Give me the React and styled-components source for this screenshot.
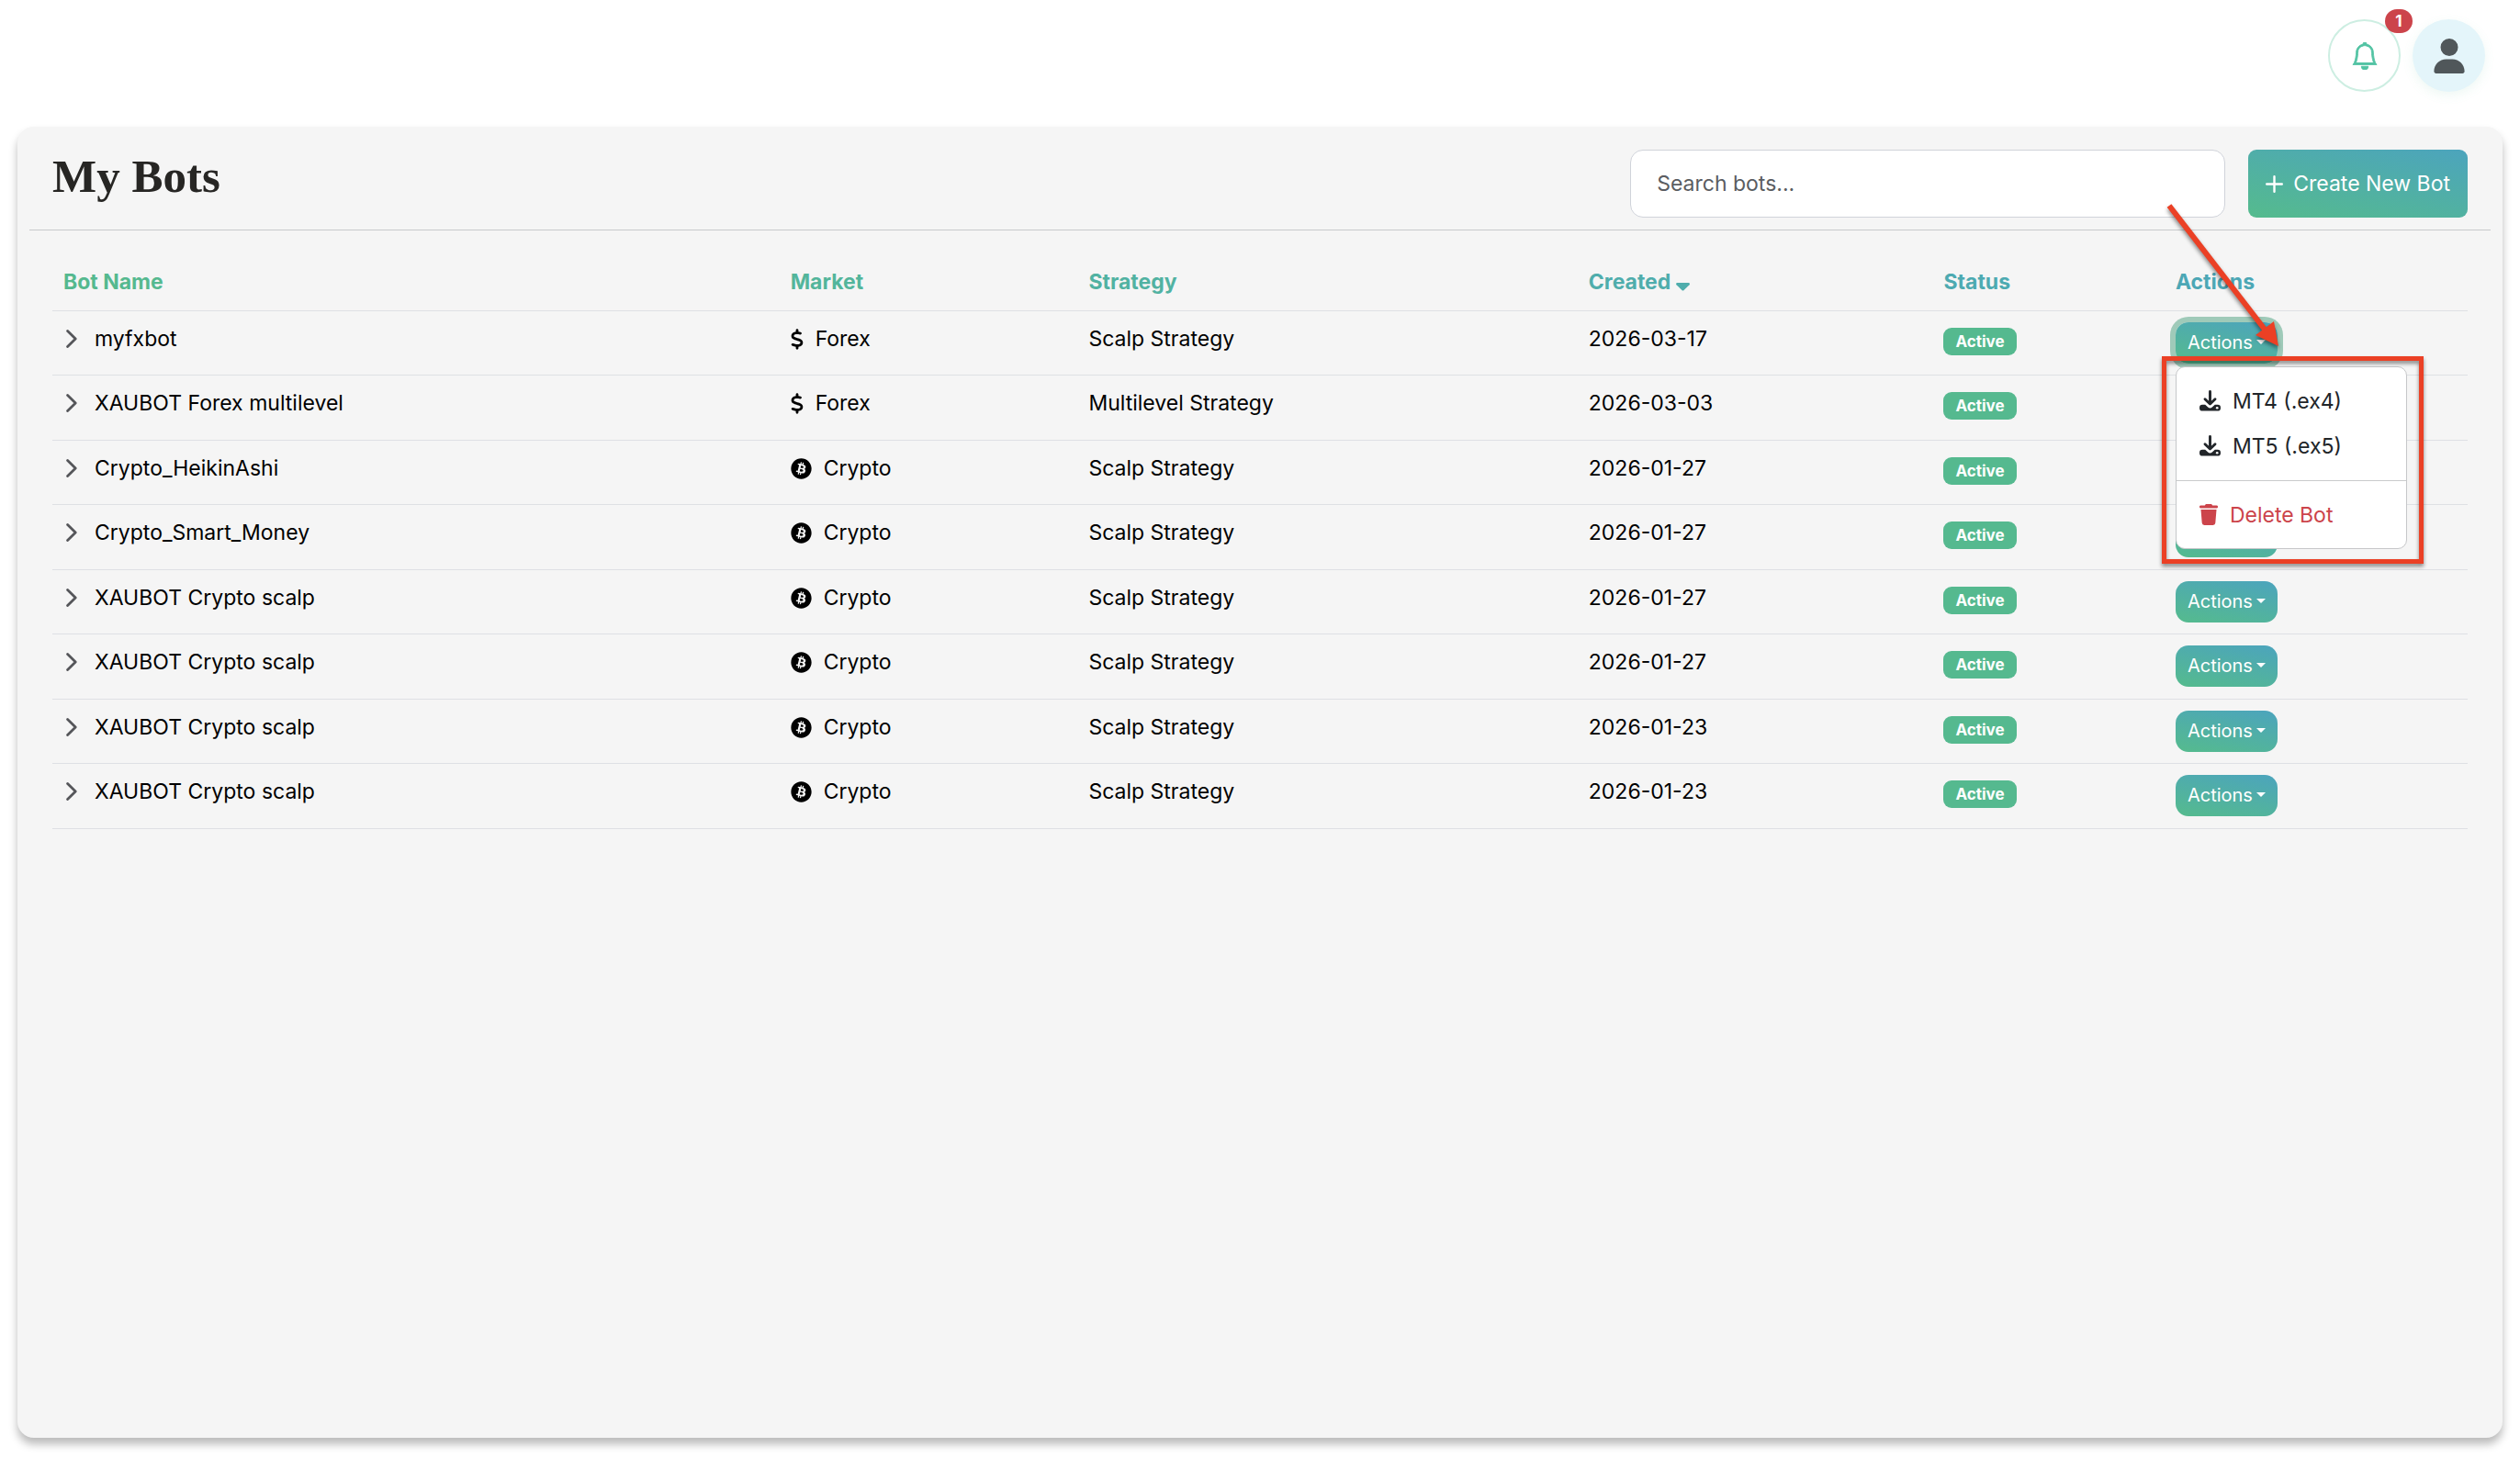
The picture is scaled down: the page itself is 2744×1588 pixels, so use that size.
import React from 'react'
import styled, { createGlobalStyle } from 'styled-components'
import { BsBell } from 'react-icons/bs'
import { FaUser, FaDollarSign, FaBitcoin } from 'react-icons/fa6'

const GlobalStyle = createGlobalStyle`
  * {
    box-sizing: border-box;
  }
  body {
    margin: 0;
    background-color: #ffffff;
    color: #000000;
    font-family: Inter, 'Liberation Sans', sans-serif;
    font-size: 23px;
    line-height: 36px;
  }
  button, input {
    font: inherit;
  }
`

const Page = styled.div`
  display: flex;
  flex-direction: column;
  min-height: 100vh;
  padding: 21px 19px 22px;
`

const TopBar = styled.header`
  display: flex;
  justify-content: flex-end;
  gap: 13px;
  padding: 0 19px;
  margin-bottom: 38px;
`

const RoundButton = styled.button`
  position: relative;
  display: flex;
  align-items: center;
  justify-content: center;
  width: 79px;
  height: 79px;
  padding: 0;
  border-radius: 50%;
`

const BellButton = styled(RoundButton)`
  color: #52c3a3;
  background-color: #ffffff;
  border: 2px solid #cdeee2;

  svg {
    stroke: currentColor;
    stroke-width: 0.5px;
  }
`

const AvatarButton = styled(RoundButton)`
  color: #50575a;
  background-color: #e4f5fa;
  border: none;
  box-shadow: 0 4px 12px rgba(84, 186, 143, 0.1);
`

const Counter = styled.span`
  position: absolute;
  top: -13px;
  right: -15px;
  width: 30px;
  color: white;
  background-color: #cc444b;
  border-radius: 13px;
  font-size: 17px;
  font-weight: 700;
  line-height: 26px;
`

const Panel = styled.main`
  flex: 1;
  padding: 0 13px;
  background-color: #f5f5f5;
  border-radius: 18px;
  box-shadow: 0 7px 10px rgba(0, 0, 0, 0.27);
`

const PanelHeader = styled.div`
  display: flex;
  align-items: flex-start;
  justify-content: space-between;
  padding: 25px 25px 13px;
  border-bottom: 1px solid #c8c9cb;
`

const Title = styled.h1`
  margin: 0;
  color: #272624;
  font-family: 'Liberation Serif', serif;
  font-size: 51px;
  font-weight: 700;
  line-height: 58px;
`

const Tools = styled.div`
  display: flex;
  gap: 25px;
`

const Search = styled.input`
  width: 648px;
  height: 74px;
  padding: 0 28px;
  background-color: white;
  border: 1px solid #d0d3da;
  border-radius: 14px;

  &::placeholder {
    color: #5b5d61;
    opacity: 1;
  }
`

const CreateButton = styled.button`
  display: flex;
  align-items: center;
  gap: 11px;
  height: 74px;
  padding: 0 19px;
  color: white;
  background: linear-gradient(12deg, #55bb8d, #4ca4bd);
  border: none;
  border-radius: 9px;
`

const TableWrap = styled.div`
  padding: 25px 25px 0;
`

const Table = styled.table`
  width: 100%;
  border-collapse: separate;
  border-spacing: 0;
  table-layout: fixed;
`

const HeadCell = styled.th`
  width: ${(props) => props.$width};
  height: 63px;
  padding: 12px;
  color: ${(props) => props.$color};
  border-bottom: 1px solid #dee0e4;
  font-weight: 700;
  text-align: left;
  vertical-align: middle;

  svg {
    vertical-align: -2px;
  }
`

const Row = styled.tr`
  height: 70px;

  &:nth-child(even) {
    height: 71px;
  }
`

const Cell = styled.td`
  padding: 12px 12px 0;
  border-bottom: 1px solid #dee0e4;
  vertical-align: top;
`

const Line = styled.div`
  display: flex;
  align-items: center;
  gap: 13px;
`

const DollarIcon = styled(FaDollarSign)`
  width: 14px;
  height: 23px;
`

const BitcoinIcon = styled(FaBitcoin)`
  width: 23px;
  height: 23px;
`

const Expand = styled.button`
  display: flex;
  width: 21px;
  padding: 0 0 0 3px;
  color: #55565a;
  background: none;
  border: none;
`

const Badge = styled.span`
  display: block;
  width: max-content;
  margin-top: 6px;
  padding: 0 13px;
  color: white;
  background-color: #55b98f;
  border-radius: 9px;
  font-size: 17px;
  font-weight: 700;
  line-height: 30px;
`

const Dropdown = styled.div`
  position: relative;
  width: max-content;
`

const ActionsButton = styled.button`
  display: flex;
  align-items: center;
  gap: 4px;
  height: 45px;
  padding: 0 13px 2px;
  color: white;
  background: linear-gradient(12deg, #55bb8d, #4ca4bd);
  border: none;
  border-radius: 14px;
  font-size: 20px;
  box-shadow: ${(props) => (props.$open ? '0 0 0 6px #9fcab9' : 'none')};
`

const Menu = styled.div`
  position: absolute;
  top: 48px;
  left: 0;
  z-index: 1;
  width: 252px;
  padding: 12px 0;
  background-color: white;
  border: 1px solid #c6c7c9;
  border-radius: 10px;
`

const MenuItem = styled.button`
  display: flex;
  align-items: center;
  gap: 13px;
  width: 100%;
  height: 49px;
  padding: 0 25px;
  color: ${(props) => (props.$danger ? '#cc444b' : '#212529')};
  background: none;
  border: none;
`

const Divider = styled.hr`
  height: 1px;
  margin: 13px 0 12px;
  background-color: #c9cacb;
  border: none;
`

const Marks = styled.svg`
  position: absolute;
  top: -130px;
  left: -16px;
  z-index: 2;
  width: 300px;
  height: 410px;
  overflow: visible;
  pointer-events: none;
  filter: drop-shadow(0 3px 2px rgba(0, 0, 0, 0.45));
`

const columns = [
  { title: 'Bot Name', width: '30.1%', color: '#55b98f' },
  { title: 'Market', width: '12.35%', color: '#53b59b' },
  { title: 'Strategy', width: '20.7%', color: '#51b2a2' },
  { title: 'Created', width: '14.7%', color: '#4fadac', sorted: true },
  { title: 'Status', width: '9.6%', color: '#4daab1' },
  { title: 'Actions', width: '12.55%', color: '#4ca7b5' },
]

const bots = [
  { name: 'myfxbot', market: 'Forex', strategy: 'Scalp Strategy', created: '2026-03-17', open: true },
  { name: 'XAUBOT Forex multilevel', market: 'Forex', strategy: 'Multilevel Strategy', created: '2026-03-03' },
  { name: 'Crypto_HeikinAshi', market: 'Crypto', strategy: 'Scalp Strategy', created: '2026-01-27' },
  { name: 'Crypto_Smart_Money', market: 'Crypto', strategy: 'Scalp Strategy', created: '2026-01-27' },
  { name: 'XAUBOT Crypto scalp', market: 'Crypto', strategy: 'Scalp Strategy', created: '2026-01-27' },
  { name: 'XAUBOT Crypto scalp', market: 'Crypto', strategy: 'Scalp Strategy', created: '2026-01-27' },
  { name: 'XAUBOT Crypto scalp', market: 'Crypto', strategy: 'Scalp Strategy', created: '2026-01-23' },
  { name: 'XAUBOT Crypto scalp', market: 'Crypto', strategy: 'Scalp Strategy', created: '2026-01-23' },
]

const PlusIcon = () => (
  <svg width="19" height="19" viewBox="0 0 19 19" fill="none" stroke="currentColor" strokeWidth="2.4" strokeLinecap="round">
    <path d="M9.5 1.2v16.6M1.2 9.5h16.6" />
  </svg>
)

const ChevronIcon = () => (
  <svg width="12" height="20" viewBox="0 0 12 20" fill="none" stroke="currentColor" strokeWidth="2.8" strokeLinecap="round" strokeLinejoin="round">
    <path d="M1.6 1.6 10.2 10l-8.6 8.4" />
  </svg>
)

const SortIcon = () => (
  <svg width="15" height="9" viewBox="0 0 15 9" fill="currentColor">
    <path d="M1.4 0h12.2c1.2 0 1.8 1.4.9 2.3L8.6 8.1a1.6 1.6 0 0 1-2.2 0L.5 2.3C-.4 1.4.2 0 1.4 0z" />
  </svg>
)

const CaretIcon = () => (
  <svg width="10" height="5" viewBox="0 0 10 5" fill="currentColor">
    <path d="M0 0h10L5 5z" />
  </svg>
)

const DownloadIcon = () => (
  <svg width="23" height="23" viewBox="0 0 23 23" fill="none" stroke="currentColor" strokeLinecap="round" strokeLinejoin="round">
    <path d="M11.5 1.5v13M6 9.8l5.5 5.2L17 9.8" strokeWidth="2.9" />
    <path d="M3.2 15.8h3l3 2.6a3.4 3.4 0 0 0 4.6 0l3-2.6h3A3.2 3.2 0 0 1 23 19a3.5 3.5 0 0 1-3.5 3.6h-16A3.5 3.5 0 0 1 0 19a3.2 3.2 0 0 1 3.2-3.2z" fill="currentColor" stroke="none" />
    <circle cx="19.2" cy="19.2" r="1.3" fill="white" stroke="none" />
  </svg>
)

const TrashIcon = () => (
  <svg width="20" height="23" viewBox="0 0 20 23" fill="currentColor">
    <path d="M6 1.2C6.3.5 7 0 7.8 0h4.4c.8 0 1.5.5 1.8 1.2l.2.3h4.4a1.4 1.4 0 0 1 0 2.9H1.4a1.4 1.4 0 0 1 0-2.9h4.4z" />
    <path d="M1.5 6h17l-1.2 14.6a2.6 2.6 0 0 1-2.6 2.4H5.3a2.6 2.6 0 0 1-2.6-2.4z" />
  </svg>
)

function App() {
  return (
    <>
      <GlobalStyle />
      <Page>
        <TopBar>
          <BellButton aria-label="Notifications">
            <BsBell size={30} />
            <Counter>1</Counter>
          </BellButton>
          <AvatarButton aria-label="Account">
            <FaUser size={38} />
          </AvatarButton>
        </TopBar>

        <Panel>
          <PanelHeader>
            <Title>My Bots</Title>
            <Tools>
              <Search type="text" placeholder="Search bots..." aria-label="Search bots" />
              <CreateButton><PlusIcon />Create New Bot</CreateButton>
            </Tools>
          </PanelHeader>

          <TableWrap>
            <Table>
              <thead>
                <tr>
                  {columns.map((col) => (
                    <HeadCell key={col.title} scope="col" $width={col.width} $color={col.color}>
                      {col.title} {col.sorted && <SortIcon />}
                    </HeadCell>
                  ))}
                </tr>
              </thead>
              <tbody>
                {bots.map((bot, index) => (
                  <Row key={index}>
                    <Cell>
                      <Line>
                        <Expand aria-label="Show details"><ChevronIcon /></Expand>
                        {bot.name}
                      </Line>
                    </Cell>
                    <Cell>
                      <Line>
                        {bot.market === 'Forex' ? <DollarIcon /> : <BitcoinIcon />}
                        {bot.market}
                      </Line>
                    </Cell>
                    <Cell>{bot.strategy}</Cell>
                    <Cell>{bot.created}</Cell>
                    <Cell><Badge>Active</Badge></Cell>
                    <Cell>
                      <Dropdown>
                        <ActionsButton $open={bot.open} aria-expanded={!!bot.open}>
                          Actions<CaretIcon />
                        </ActionsButton>
                        {bot.open && (
                          <>
                            <Menu>
                              <MenuItem><DownloadIcon />MT4 (.ex4)</MenuItem>
                              <MenuItem><DownloadIcon />MT5 (.ex5)</MenuItem>
                              <Divider />
                              <MenuItem $danger><TrashIcon />Delete Bot</MenuItem>
                            </Menu>
                            <Marks viewBox="0 0 300 410" fill="none" stroke="#eb4025" aria-hidden="true">
                              <rect x="3.5" y="169.5" width="280" height="221" strokeWidth="5" />
                              <path d="M9 3l105 136" strokeWidth="6" />
                              <path d="M128 156l-25-12 20-15z" fill="#eb4025" stroke="none" />
                            </Marks>
                          </>
                        )}
                      </Dropdown>
                    </Cell>
                  </Row>
                ))}
              </tbody>
            </Table>
          </TableWrap>
        </Panel>
      </Page>
    </>
  )
}

export default App
